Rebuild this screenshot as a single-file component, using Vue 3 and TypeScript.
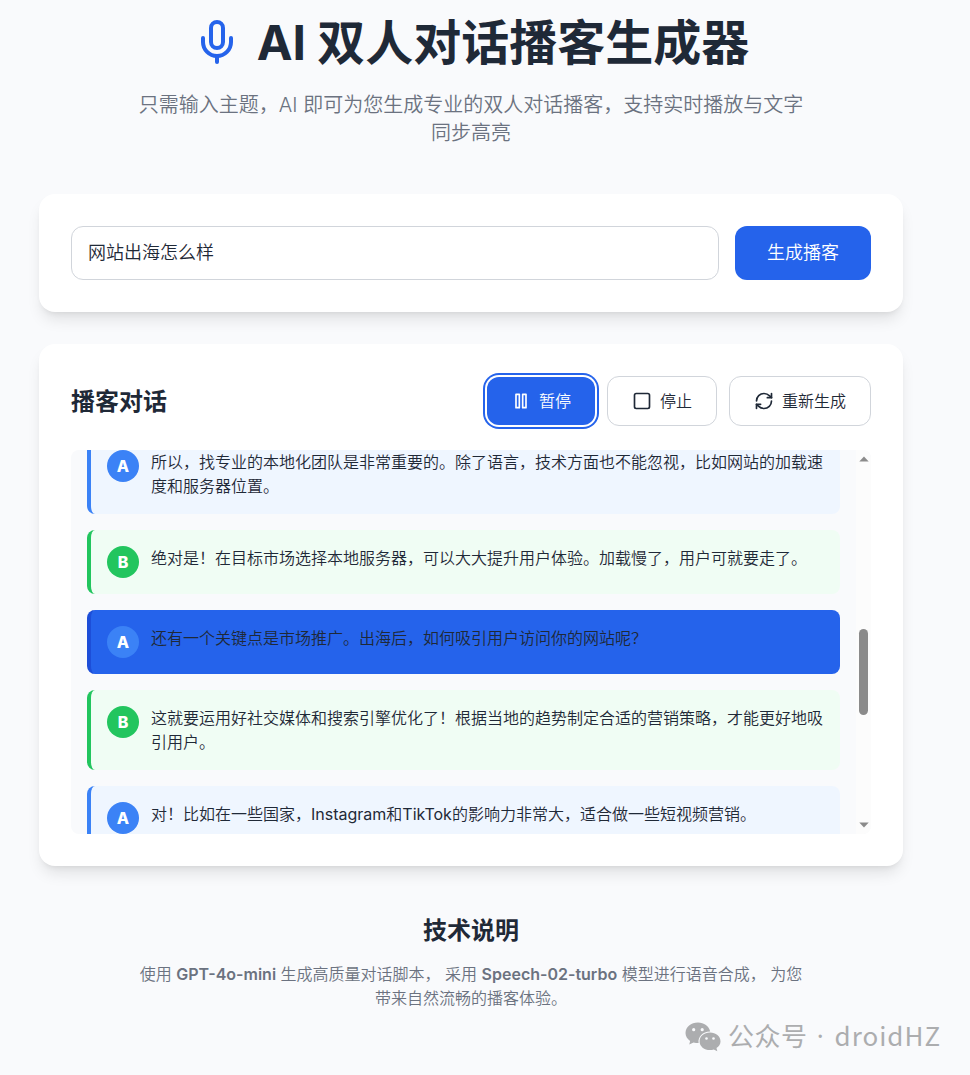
<script setup lang="ts">
import { ref } from 'vue'

interface Line {
  speaker: 'A' | 'B'
  text: string
}

const topic = ref('网站出海怎么样')
const current = ref(2)

const lines: Line[] = [
  { speaker: 'A', text: '所以，找专业的本地化团队是非常重要的。除了语言，技术方面也不能忽视，比如网站的加载速度和服务器位置。' },
  { speaker: 'B', text: '绝对是！在目标市场选择本地服务器，可以大大提升用户体验。加载慢了，用户可就要走了。' },
  { speaker: 'A', text: '还有一个关键点是市场推广。出海后，如何吸引用户访问你的网站呢？' },
  { speaker: 'B', text: '这就要运用好社交媒体和搜索引擎优化了！根据当地的趋势制定合适的营销策略，才能更好地吸引用户。' },
  { speaker: 'A', text: '对！比如在一些国家，Instagram和TikTok的影响力非常大，适合做一些短视频营销。' },
]

// Latin words get their own run so they can carry a regular weight.
const runs = (text: string): string[] => text.split(/([A-Za-z]+)/).filter(Boolean)
const isLatin = (run: string): boolean => /^[A-Za-z]/.test(run)
</script>

<template>
  <div class="page">
    <header class="hero">
      <h1 class="title">
        <svg class="mic" viewBox="0 0 24 24">
          <path d="M12 2a3 3 0 0 0-3 3v7a3 3 0 0 0 6 0V5a3 3 0 0 0-3-3Z" />
          <path d="M19 10v2a7 7 0 0 1-14 0v-2" />
          <path d="M12 19v3" />
        </svg>
        <span class="name">AI 双人对话播客生成器</span>
      </h1>
      <p class="subtitle">只需输入主题，AI 即可为您生成专业的双人对话播客，支持实时播放与文字同步高亮</p>
    </header>

    <section class="card form">
      <input v-model="topic" class="topic" type="text" />
      <button class="generate" type="button">生成播客</button>
    </section>

    <section class="card">
      <div class="toolbar">
        <h2 class="heading">播客对话</h2>
        <div class="actions">
          <button class="btn primary" type="button">
            <svg class="icon" viewBox="0 0 24 24">
              <rect x="6" y="4" width="4" height="16" />
              <rect x="14" y="4" width="4" height="16" />
            </svg>
            暂停
          </button>
          <button class="btn" type="button">
            <svg class="icon" viewBox="0 0 24 24">
              <rect x="3" y="3" width="18" height="18" rx="2" />
            </svg>
            停止
          </button>
          <button class="btn" type="button">
            <svg class="icon" viewBox="0 0 24 24">
              <path d="M3 12a9 9 0 0 1 9-9 9.75 9.75 0 0 1 6.74 2.74L21 8" />
              <path d="M21 3v5h-5" />
              <path d="M21 12a9 9 0 0 1-9 9 9.75 9.75 0 0 1-6.74-2.74L3 16" />
              <path d="M8 16H3v5" />
            </svg>
            重新生成
          </button>
        </div>
      </div>

      <div class="viewport">
        <div class="lines">
          <div
            v-for="(line, i) in lines"
            :key="i"
            class="line"
            :class="[line.speaker === 'A' ? 'host' : 'guest', { active: i === current }]"
          >
            <span class="avatar">{{ line.speaker }}</span>
            <p class="text"><span v-for="(run, r) in runs(line.text)" :key="r" :class="{ latin: isLatin(run) }">{{ run }}</span></p>
          </div>
        </div>
        <div class="scrollbar">
          <svg class="arrow" viewBox="0 0 10 6"><path d="M5 0.5 9.7 5.5H0.3Z" /></svg>
          <div class="track"><div class="thumb"></div></div>
          <svg class="arrow" viewBox="0 0 10 6"><path d="M5 5.5 9.7 0.5H0.3Z" /></svg>
        </div>
      </div>
    </section>

    <footer class="about">
      <h3 class="heading">技术说明</h3>
      <p class="note">
        使用 <strong>GPT-4o-mini</strong> 生成高质量对话脚本， 采用 <strong>Speech-02-turbo</strong> 模型进行语音合成， 为您带来自然流畅的播客体验。
      </p>
    </footer>

    <div class="watermark">
      <svg class="wechat" viewBox="0 0 36 30">
        <path d="M13 .5C6 .5.5 5 .5 11c0 3.300 1.800 6 4.600 8L4.300 22.600l4.200-2.200c1.700.5 3.200.7 5.100.7C12.600 14.500 18 9.200 25.200 9.400 24 4.200 19 .5 13 .5Z" />
        <path d="M25 10.600c-5.800 0-10.400 3.900-10.400 8.800S19.200 28 25 28c1.300 0 2.600-.2 3.800-.6l3.500 1.900-.8-3.200c2.400-1.700 4-4 4-6.700 0-4.900-4.700-8.800-10.500-8.800Z" />
        <g class="eyes">
          <circle cx="8.700" cy="7.700" r="1.600" />
          <circle cx="17.200" cy="7.700" r="1.600" />
          <circle cx="21.500" cy="16.500" r="1.300" />
          <circle cx="28.500" cy="16.500" r="1.300" />
        </g>
      </svg>
      <span>公众号</span>
      <span class="dot">·</span>
      <span class="account">droidHZ</span>
    </div>
  </div>
</template>

<style>
html,
body {
  margin: 0;
  background: #f9fafc;
}
</style>

<style scoped>
.page {
  position: relative;
  box-sizing: border-box;
  width: 970px;
  height: 1075px;
  padding: 10px 67px 0 39px;
  overflow: hidden;
  background: #f9fafc;
  color: #1f2937;
  font: 350 16px/24px Inter, 'Noto Sans CJK SC', sans-serif;
}

h1,
h2,
h3,
p {
  margin: 0;
}

.hero {
  height: 184px;
  text-align: center;
}

.title {
  display: flex;
  align-items: center;
  justify-content: center;
  gap: 16px;
  height: 64px;
  font-size: 48px;
  line-height: 64px;
  font-weight: 700;
  white-space: nowrap;
}

.name {
  padding-top: 2px;
}

.mic {
  width: 48px;
  height: 48px;
  fill: none;
  stroke: #2563eb;
  stroke-width: 2;
  stroke-linecap: round;
  stroke-linejoin: round;
}

.subtitle {
  width: 672px;
  margin: 17px auto 0;
  color: #6b7280;
  font-size: 20px;
  line-height: 28px;
}

.card {
  box-sizing: border-box;
  margin-bottom: 32px;
  padding: 32px;
  border-radius: 16px;
  background: #fff;
  box-shadow: 0 10px 15px -3px rgba(0, 0, 0, 0.1), 0 4px 6px -4px rgba(0, 0, 0, 0.1);
}

.form {
  display: flex;
  gap: 16px;
  height: 118px;
}

.topic {
  box-sizing: border-box;
  flex: 1;
  min-width: 0;
  padding: 0 16px;
  border: 1px solid #d1d5db;
  border-radius: 12px;
  outline: none;
  background: #fff;
  color: inherit;
  font: inherit;
  font-size: 18px;
}

.generate {
  width: 136px;
  padding: 0;
  border: 0;
  border-radius: 12px;
  background: #2563eb;
  color: #fff;
  font: inherit;
  font-size: 18px;
}

.toolbar {
  display: flex;
  align-items: center;
  justify-content: space-between;
  height: 50px;
  margin-bottom: 24px;
}

.heading {
  padding-top: 1px;
  font-size: 24px;
  line-height: 32px;
  font-weight: 700;
}

.actions {
  display: flex;
  align-items: center;
  gap: 12px;
}

.btn {
  display: flex;
  align-items: center;
  gap: 8px;
  padding: 12px 24px;
  border: 1px solid #d1d5db;
  border-radius: 12px;
  background: #fff;
  color: inherit;
  font: inherit;
}

.primary {
  border: 0;
  background: #2563eb;
  color: #fff;
  box-shadow: 0 0 0 2px #fff, 0 0 0 4px #2563eb;
}

.icon {
  width: 20px;
  height: 20px;
  fill: none;
  stroke: currentColor;
  stroke-width: 2;
  stroke-linecap: round;
  stroke-linejoin: round;
}

.viewport {
  display: flex;
  height: 384px;
  overflow: hidden;
  border-radius: 8px;
  background: #f9fafc;
}

.lines {
  display: flex;
  flex: 1;
  flex-direction: column;
  gap: 16px;
  margin-top: -32px;
  padding: 16px;
}

.line {
  display: flex;
  flex-shrink: 0;
  gap: 12px;
  align-items: flex-start;
  padding: 16px;
  border-left: 4px solid;
  border-radius: 8px;
}

.host {
  border-color: #3b82f6;
  background: #eff6ff;
}

.guest {
  border-color: #22c55e;
  background: #f0fdf4;
}

.line.active {
  border-color: #1d4ed8;
  background: #2563eb;
}

.avatar {
  flex: none;
  width: 32px;
  height: 32px;
  border-radius: 50%;
  color: #fff;
  line-height: 32px;
  font-weight: 800;
  text-align: center;
}

.host .avatar {
  background: #3b82f6;
}

.guest .avatar {
  background: #22c55e;
}

.text {
  flex: 1;
}

.latin {
  font-weight: 400;
}

.scrollbar {
  display: flex;
  flex-direction: column;
  align-items: center;
  box-sizing: border-box;
  width: 15px;
  padding: 6px 0;
  background: #fcfcfc;
}

.arrow {
  width: 10px;
  height: 6px;
  fill: #8b8b8b;
}

.track {
  flex: 1;
}

.thumb {
  width: 9px;
  height: 86px;
  margin-top: 167px;
  border-radius: 5px;
  background: #8b8b8b;
}

.about {
  padding-top: 16px;
  text-align: center;
}

.note {
  width: 672px;
  margin: 15px auto 0;
  color: #6b7280;
}

.note strong {
  font-weight: 600;
}

.watermark {
  position: absolute;
  top: 1019px;
  left: 685px;
  display: flex;
  align-items: center;
  height: 32px;
  color: #acadaf;
  font: 400 26px/32px 'Noto Sans CJK SC', sans-serif;
  letter-spacing: 0.5px;
  white-space: nowrap;
}

.wechat {
  width: 36px;
  height: 30px;
  margin: 4px 7px 0 0;
  fill: #acadaf;
}

.dot {
  width: 26px;
  font-family: 'Noto Sans', sans-serif;
  text-align: center;
}

.account {
  margin-left: 1px;
  letter-spacing: 1px;
}

.eyes {
  fill: #f9fafc;
}
</style>
